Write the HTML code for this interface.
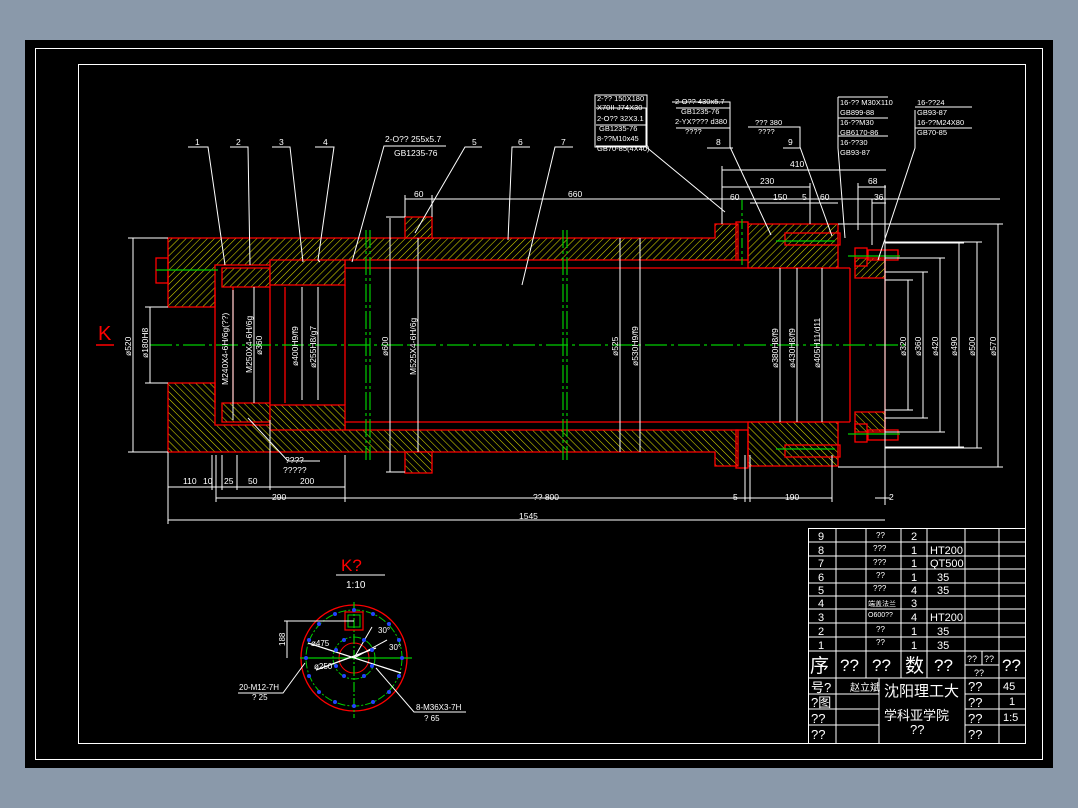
<!DOCTYPE html>
<html><head><meta charset="utf-8"><style>
html,body{margin:0;padding:0;background:#8a99aa;}
svg{display:block}
text{font-family:"Liberation Sans","Noto Sans CJK SC",sans-serif;fill:#fff}
</style></head><body>
<svg width="1078" height="808" viewBox="0 0 1078 808" xmlns="http://www.w3.org/2000/svg">
<defs>
<pattern id="h" width="5" height="5" patternUnits="userSpaceOnUse" patternTransform="rotate(45)">
<rect width="5" height="5" fill="#000"/><line x1="0" y1="0" x2="0" y2="5" stroke="#d8d800" stroke-width="1.1"/>
</pattern>
</defs>
<rect x="0" y="0" width="1078" height="808" fill="#8a99aa"/>
<rect x="25" y="40" width="1028" height="728" fill="#000"/>
<rect x="35.5" y="48.5" width="1007" height="711" fill="none" stroke="#fff" stroke-width="1"/>
<rect x="78.5" y="64.5" width="947" height="679" fill="none" stroke="#fff" stroke-width="1"/>

<!-- cylinder top half + mirrored -->
<g id="half" stroke="#f00" stroke-width="1.3">
 <polygon points="168,238 715,238 715,224 738,224 738,260 345,260 345,265 215,265 215,307 168,307" fill="url(#h)"/>
 <polygon points="222,268 270,268 270,287 222,287" fill="url(#h)"/>
 <polygon points="270,260 345,260 345,285 270,285" fill="url(#h)"/>
 <polygon points="748,224 838,224 838,268 748,268" fill="url(#h)"/>
 <polygon points="855,258 885,258 885,278 855,278" fill="url(#h)"/>
 <polygon points="405,217 432,217 432,238 405,238" fill="url(#h)"/>
 <line x1="345" y1="268" x2="850" y2="268"/>
 <line x1="850" y1="268" x2="850" y2="345"/>
 <line x1="885" y1="258" x2="885" y2="345" />
 <line x1="215" y1="287" x2="215" y2="345"/>
 <line x1="233" y1="287" x2="233" y2="345"/>
 <line x1="270" y1="287" x2="270" y2="345"/>
 <line x1="285" y1="287" x2="285" y2="345"/>
 <line x1="345" y1="285" x2="345" y2="345"/>
 <rect x="736" y="222" width="12" height="38" fill="none"/>
 <rect x="785" y="233" width="55" height="12" fill="none"/>
 <rect x="855" y="248" width="12" height="18" fill="none"/>
 <rect x="868" y="250" width="30" height="10" fill="none"/>
</g>
<use href="#half" transform="translate(0,690) scale(1,-1)"/>
<rect x="156" y="258" width="12" height="25" fill="none" stroke="#f00" stroke-width="1.3"/>

<!-- green centerlines -->
<g stroke="#0c0" stroke-width="1.2" fill="none">
 <line x1="150" y1="345" x2="905" y2="345" stroke-dasharray="22,4,3,4"/>
 <line x1="156" y1="270" x2="218" y2="270"/>
 <line x1="366" y1="230" x2="366" y2="460" stroke-dasharray="18,3,3,3"/>
 <line x1="370" y1="230" x2="370" y2="460" stroke-dasharray="18,3,3,3"/>
 <line x1="563" y1="230" x2="563" y2="460" stroke-dasharray="18,3,3,3"/>
 <line x1="567" y1="230" x2="567" y2="460" stroke-dasharray="18,3,3,3"/>
 <line x1="742" y1="200" x2="742" y2="265" stroke-dasharray="10,3,3,3"/>
 <line x1="776" y1="241" x2="835" y2="241"/><line x1="776" y1="449" x2="835" y2="449"/>
 <line x1="848" y1="256" x2="900" y2="256"/><line x1="848" y1="434" x2="900" y2="434"/>
</g>

<!-- K arrow -->
<text x="98" y="340" font-size="20" style="fill:#f00">K</text>
<line x1="96" y1="345" x2="114" y2="345" stroke="#f00" stroke-width="1.5"/>

<!-- dimension lines -->
<g stroke="#fff" stroke-width="1" fill="none">
 <line x1="128" y1="238" x2="168" y2="238"/><line x1="128" y1="452" x2="168" y2="452"/>
 <line x1="133" y1="238" x2="133" y2="452"/>
 <line x1="145" y1="307" x2="168" y2="307"/><line x1="145" y1="383" x2="168" y2="383"/>
 <line x1="150" y1="307" x2="150" y2="383"/>
 <line x1="233" y1="290" x2="233" y2="420"/><line x1="254" y1="287" x2="254" y2="403"/>
 <line x1="302" y1="287" x2="302" y2="400"/><line x1="318" y1="287" x2="318" y2="400"/>
 <line x1="390" y1="218" x2="390" y2="472"/><line x1="386" y1="217" x2="405" y2="217"/><line x1="386" y1="472" x2="405" y2="472"/>
 <line x1="418" y1="238" x2="418" y2="452"/>
 <line x1="620" y1="238" x2="620" y2="452"/><line x1="640" y1="238" x2="640" y2="452"/>
 <line x1="780" y1="268" x2="780" y2="422"/><line x1="797" y1="268" x2="797" y2="422"/><line x1="822" y1="268" x2="822" y2="422"/>
 <line x1="885" y1="280" x2="913" y2="280"/><line x1="885" y1="410" x2="913" y2="410"/><line x1="908" y1="280" x2="908" y2="410"/>
 <line x1="885" y1="272" x2="928" y2="272"/><line x1="885" y1="418" x2="928" y2="418"/><line x1="923" y1="272" x2="923" y2="418"/>
 <line x1="885" y1="258" x2="945" y2="258"/><line x1="885" y1="432" x2="945" y2="432"/><line x1="940" y1="258" x2="940" y2="432"/>
 <line x1="885" y1="243" x2="964" y2="243"/><line x1="885" y1="447" x2="964" y2="447"/><line x1="959" y1="243" x2="959" y2="447"/>
 <line x1="885" y1="242" x2="982" y2="242"/><line x1="885" y1="448" x2="982" y2="448"/><line x1="977" y1="242" x2="977" y2="448"/>
 <line x1="838" y1="224" x2="1003" y2="224"/><line x1="838" y1="467" x2="1003" y2="467"/><line x1="998" y1="224" x2="998" y2="467"/>
 <line x1="885" y1="185" x2="885" y2="505"/>
 <!-- top dims -->
 <line x1="405" y1="199" x2="1000" y2="199"/><line x1="405" y1="195" x2="405" y2="217"/><line x1="432" y1="195" x2="432" y2="217"/>
 <line x1="722" y1="170" x2="886" y2="170"/><line x1="722" y1="166" x2="722" y2="224"/>
 <line x1="722" y1="187" x2="810" y2="187"/><line x1="810" y1="183" x2="810" y2="224"/>
 <line x1="858" y1="187" x2="886" y2="187"/><line x1="858" y1="183" x2="858" y2="230"/>
 <line x1="872" y1="203" x2="886" y2="203"/><line x1="872" y1="199" x2="872" y2="245"/>
 <line x1="750" y1="203" x2="838" y2="203"/>
 <!-- bottom dims -->
 <line x1="168" y1="487" x2="345" y2="487"/>
 <line x1="216" y1="498" x2="832" y2="498"/>
 <line x1="168" y1="520" x2="885" y2="520"/>
 <line x1="168" y1="452" x2="168" y2="524"/><line x1="216" y1="455" x2="216" y2="502"/>
 <line x1="212" y1="455" x2="212" y2="490"/><line x1="222" y1="455" x2="222" y2="490"/><line x1="237" y1="455" x2="237" y2="490"/>
 <line x1="270" y1="420" x2="270" y2="490"/><line x1="345" y1="455" x2="345" y2="502"/>
 <line x1="745" y1="455" x2="745" y2="502"/><line x1="750" y1="455" x2="750" y2="502"/><line x1="832" y1="455" x2="832" y2="502"/>
 <line x1="875" y1="498" x2="890" y2="498"/>
 <!-- leaders -->
 <polyline points="188,147 208,147 225,265"/>
 <polyline points="230,147 248,147 250,265"/>
 <polyline points="272,147 290,147 303,262"/>
 <polyline points="315,147 334,147 318,260 320,262"/>
 <polyline points="446,146 384,146 352,262"/>
 <polyline points="482,147 465,147 415,233"/>
 <polyline points="530,147 512,147 508,240"/>
 <polyline points="573,147 555,147 522,285"/>
 <polyline points="596,146 645,146 725,212"/>
 <polyline points="672,102 730,102 730,147 771,235"/>
 <polyline points="707,148 733,148"/>
 <polyline points="748,127 800,127 800,147 832,236"/>
 <polyline points="783,148 800,148"/>
 <polyline points="838,97 888,97"/><line x1="838" y1="97" x2="838" y2="148"/>
 <polyline points="838,148 845,238"/>
 <polyline points="915,107 972,107"/><polyline points="915,110 915,148 878,260"/>
 <polyline points="248,418 288,461 320,461"/>
 <polyline points="676,108 730,108"/><polyline points="676,128 730,128"/>
 <polyline points="596,108 646,108 646,146"/><polyline points="596,125 646,125"/>
 <polyline points="838,118 888,118"/><polyline points="838,136 888,136"/>
 <polyline points="915,128 972,128"/>
</g>
<rect x="595" y="95" width="52" height="52" fill="none" stroke="#fff"/>

<g font-size="8.5">
 <text x="195" y="145">1</text><text x="236" y="145">2</text><text x="279" y="145">3</text><text x="323" y="145">4</text>
 <text x="385" y="142">2-O?? 255x5.7</text><text x="394" y="156">GB1235-76</text>
 <text x="472" y="145">5</text><text x="518" y="145">6</text><text x="561" y="145">7</text>
 <text x="597" y="101" font-size="7.5">2-?? 150X180</text><text x="597" y="110" font-size="7.5">X70II-J74X30</text>
 <text x="597" y="121" font-size="7.5">2-O?? 32X3.1</text><text x="599" y="131" font-size="7.5">GB1235-76</text>
 <text x="597" y="141" font-size="7.5">8-??M10x45</text><text x="597" y="151" font-size="7.5">GB70-85(4X40)</text>
 <text x="675" y="104" font-size="7.5">2-O?? 430x5.7</text><text x="681" y="114" font-size="7.5">GB1235-76</text>
 <text x="675" y="124" font-size="7.5">2-YX???? d380</text><text x="685" y="134" font-size="7.5">????</text>
 <text x="716" y="145">8</text>
 <text x="755" y="125" font-size="7.5">??? 380</text><text x="758" y="134" font-size="7.5">????</text>
 <text x="788" y="145">9</text>
 <text x="840" y="105" font-size="7.5">16-?? M30X110</text><text x="840" y="115" font-size="7.5">GB899-88</text>
 <text x="840" y="125" font-size="7.5">16-??M30</text><text x="840" y="135" font-size="7.5">GB6170-86</text>
 <text x="840" y="145" font-size="7.5">16-??30</text><text x="840" y="155" font-size="7.5">GB93-87</text>
 <text x="917" y="105" font-size="7.5">16-??24</text><text x="917" y="115" font-size="7.5">GB93-87</text>
 <text x="917" y="125" font-size="7.5">16-??M24X80</text><text x="917" y="135" font-size="7.5">GB70-85</text>
 <text x="414" y="197">60</text><text x="568" y="197">660</text>
 <text x="790" y="167">410</text><text x="760" y="184">230</text><text x="868" y="184">68</text>
 <text x="730" y="200">60</text><text x="773" y="200">150</text><text x="802" y="200">5</text><text x="820" y="200">60</text><text x="874" y="200">36</text>
 <text x="183" y="484">110</text><text x="203" y="484">10</text><text x="224" y="484">25</text><text x="248" y="484">50</text><text x="300" y="484">200</text>
 <text x="272" y="500">290</text><text x="533" y="500">?? 800</text><text x="733" y="500">5</text><text x="785" y="500">190</text><text x="889" y="500">2</text>
 <text x="519" y="519">1545</text>
 <text x="285" y="463">????</text><text x="283" y="473">?????</text>
</g>
<g font-size="8.5">
 <text transform="translate(131,356) rotate(-90)">ø520</text>
 <text transform="translate(148,358) rotate(-90)">ø180H8</text>
 <text transform="translate(228,385) rotate(-90)">M240X4-6H/6g(??)</text>
 <text transform="translate(252,373) rotate(-90)">M250X4-6H/6g</text>
 <text transform="translate(262,355) rotate(-90)">ø360</text>
 <text transform="translate(298,366) rotate(-90)">ø400H9/f9</text>
 <text transform="translate(316,368) rotate(-90)">ø255H8/g7</text>
 <text transform="translate(388,356) rotate(-90)">ø600</text>
 <text transform="translate(416,375) rotate(-90)">M525X4-6H/6g</text>
 <text transform="translate(618,356) rotate(-90)">ø525</text>
 <text transform="translate(638,366) rotate(-90)">ø530H9/f9</text>
 <text transform="translate(778,368) rotate(-90)">ø380H8/f9</text>
 <text transform="translate(795,368) rotate(-90)">ø430H8/f9</text>
 <text transform="translate(820,368) rotate(-90)">ø405H11/d11</text>
 <text transform="translate(906,356) rotate(-90)">ø320</text>
 <text transform="translate(921,356) rotate(-90)">ø360</text>
 <text transform="translate(938,356) rotate(-90)">ø420</text>
 <text transform="translate(957,356) rotate(-90)">ø490</text>
 <text transform="translate(975,356) rotate(-90)">ø500</text>
 <text transform="translate(996,356) rotate(-90)">ø570</text>
</g>

<!-- K view -->
<text x="341" y="571" font-size="17" style="fill:#f00">K?</text>
<line x1="336" y1="575" x2="385" y2="575" stroke="#fff"/>
<text x="346" y="588" font-size="10">1:10</text>
<g fill="none">
 <circle cx="354" cy="658" r="53" stroke="#f00" stroke-width="1.3"/>
 <circle cx="354" cy="658" r="48" stroke="#0c0" stroke-dasharray="8,2,2,2"/>
 <circle cx="354" cy="658" r="21" stroke="#0c0" stroke-dasharray="8,2,2,2"/>
 <circle cx="354" cy="658" r="15" stroke="#f00"/>
 <line x1="300" y1="658" x2="412" y2="658" stroke="#0c0" stroke-width="1.2"/>
 <line x1="354" y1="602" x2="354" y2="718" stroke="#0c0" stroke-width="1.2" stroke-dasharray="10,2,2,2"/>
 <rect x="345" y="612" width="18" height="18" stroke="#f00" stroke-width="1.2"/>
 <rect x="348" y="615" width="12" height="12" stroke="#0c0"/>
 <line x1="284" y1="621" x2="354" y2="621" stroke="#fff"/>
 <line x1="287" y1="621" x2="287" y2="658" stroke="#fff"/>
 <line x1="308" y1="643" x2="401" y2="673" stroke="#fff" stroke-width="1.3"/>
 <line x1="316" y1="670" x2="376" y2="648" stroke="#fff" stroke-width="1.3"/>
 <line x1="354" y1="658" x2="372" y2="627" stroke="#fff"/>
 <line x1="354" y1="658" x2="387" y2="640" stroke="#fff"/>
 <polyline points="305,663 283,693 238,693" stroke="#fff"/>
 <polyline points="376,668 414,712 466,712" stroke="#fff"/>
</g>
<g fill="#24f">
 <circle cx="354" cy="610" r="2"/><circle cx="354" cy="706" r="2"/><circle cx="306" cy="658" r="2"/><circle cx="402" cy="658" r="2"/>
 <circle cx="335" cy="614" r="2"/><circle cx="373" cy="614" r="2"/><circle cx="335" cy="702" r="2"/><circle cx="373" cy="702" r="2"/>
 <circle cx="319" cy="624" r="2"/><circle cx="389" cy="624" r="2"/><circle cx="319" cy="692" r="2"/><circle cx="389" cy="692" r="2"/>
 <circle cx="309" cy="640" r="2"/><circle cx="399" cy="640" r="2"/><circle cx="309" cy="676" r="2"/><circle cx="399" cy="676" r="2"/>
 <circle cx="344" cy="640" r="2"/><circle cx="364" cy="640" r="2"/><circle cx="344" cy="676" r="2"/><circle cx="364" cy="676" r="2"/>
 <circle cx="336" cy="650" r="2"/><circle cx="372" cy="650" r="2"/><circle cx="336" cy="666" r="2"/><circle cx="372" cy="666" r="2"/>
</g>
<g font-size="8">
 <text transform="translate(285,646) rotate(-90)">188</text>
 <text x="311" y="646">ø475</text><text x="314" y="669">ø250</text>
 <text x="378" y="633">30°</text><text x="389" y="650">30°</text>
 <text x="239" y="690">20-M12-7H</text><text x="252" y="700">? 25</text>
 <text x="416" y="710">8-M36X3-7H</text><text x="424" y="721">? 65</text>
</g>

<!-- title table -->
<g stroke="#fff" stroke-width="1" fill="none">
 <rect x="808.5" y="528.5" width="217" height="215"/>
 <line x1="808" y1="542" x2="1025" y2="542"/><line x1="808" y1="556" x2="1025" y2="556"/>
 <line x1="808" y1="569" x2="1025" y2="569"/><line x1="808" y1="583" x2="1025" y2="583"/>
 <line x1="808" y1="596" x2="1025" y2="596"/><line x1="808" y1="609" x2="1025" y2="609"/>
 <line x1="808" y1="623" x2="1025" y2="623"/><line x1="808" y1="637" x2="1025" y2="637"/>
 <line x1="808" y1="651" x2="1025" y2="651"/><line x1="808" y1="678" x2="1025" y2="678"/>
 <line x1="836" y1="528" x2="836" y2="743"/>
 <line x1="866" y1="528" x2="866" y2="678"/><line x1="901" y1="528" x2="901" y2="678"/>
 <line x1="927" y1="528" x2="927" y2="678"/><line x1="965" y1="528" x2="965" y2="743"/>
 <line x1="999" y1="528" x2="999" y2="743"/><line x1="982" y1="651" x2="982" y2="665"/>
 <line x1="965" y1="665" x2="999" y2="665"/>
 <line x1="879" y1="678" x2="879" y2="743"/>
 <line x1="808" y1="694" x2="879" y2="694"/><line x1="808" y1="709" x2="879" y2="709"/><line x1="808" y1="725" x2="879" y2="725"/>
 <line x1="965" y1="694" x2="1025" y2="694"/><line x1="965" y1="709" x2="1025" y2="709"/><line x1="965" y1="725" x2="1025" y2="725"/>
</g>
<g font-size="11">
 <text x="818" y="540">9</text><text x="818" y="554">8</text><text x="818" y="567">7</text><text x="818" y="581">6</text>
 <text x="818" y="594">5</text><text x="818" y="607">4</text><text x="818" y="621">3</text><text x="818" y="635">2</text><text x="818" y="649">1</text>
 <text x="876" y="538" font-size="8">??</text><text x="873" y="551" font-size="8">???</text><text x="873" y="565" font-size="8">???</text>
 <text x="876" y="578" font-size="8">??</text><text x="873" y="591" font-size="8">???</text><text x="868" y="606" font-size="7">端盖法兰</text>
 <text x="868" y="617" font-size="7">O600??</text><text x="876" y="632" font-size="8">??</text><text x="876" y="645" font-size="8">??</text>
 <text x="911" y="540">2</text><text x="911" y="554">1</text><text x="911" y="567">1</text><text x="911" y="581">1</text>
 <text x="911" y="594">4</text><text x="911" y="607">3</text><text x="911" y="621">4</text><text x="911" y="635">1</text><text x="911" y="649">1</text>
 <text x="930" y="554">HT200</text><text x="930" y="567">QT500</text><text x="937" y="581">35</text><text x="937" y="594">35</text>
 <text x="930" y="621">HT200</text><text x="937" y="635">35</text><text x="937" y="649">35</text>
 <text x="810" y="672" font-size="19">序</text><text x="840" y="671" font-size="17">??</text><text x="872" y="671" font-size="17">??</text>
 <text x="905" y="672" font-size="19">数</text><text x="934" y="671" font-size="17">??</text>
 <text x="967" y="662" font-size="9">??</text><text x="984" y="662" font-size="9">??</text><text x="974" y="676" font-size="9">??</text>
 <text x="1002" y="671" font-size="17">??</text>
 <text x="811" y="692" font-size="13">号?</text><text x="850" y="691" font-size="10">赵立斌</text>
 <text x="811" y="707" font-size="13">?图</text><text x="811" y="723" font-size="13">??</text><text x="811" y="739" font-size="13">??</text>
 <text x="884" y="696" font-size="15">沈阳理工大</text><text x="884" y="720" font-size="13">学科亚学院</text>
 <text x="910" y="734" font-size="13">??</text>
 <text x="968" y="691" font-size="13">??</text><text x="968" y="707" font-size="13">??</text><text x="968" y="723" font-size="13">??</text><text x="968" y="739" font-size="13">??</text>
 <text x="1003" y="690">45</text><text x="1009" y="705">1</text><text x="1003" y="721">1:5</text>
</g>
</svg>
</body></html>
